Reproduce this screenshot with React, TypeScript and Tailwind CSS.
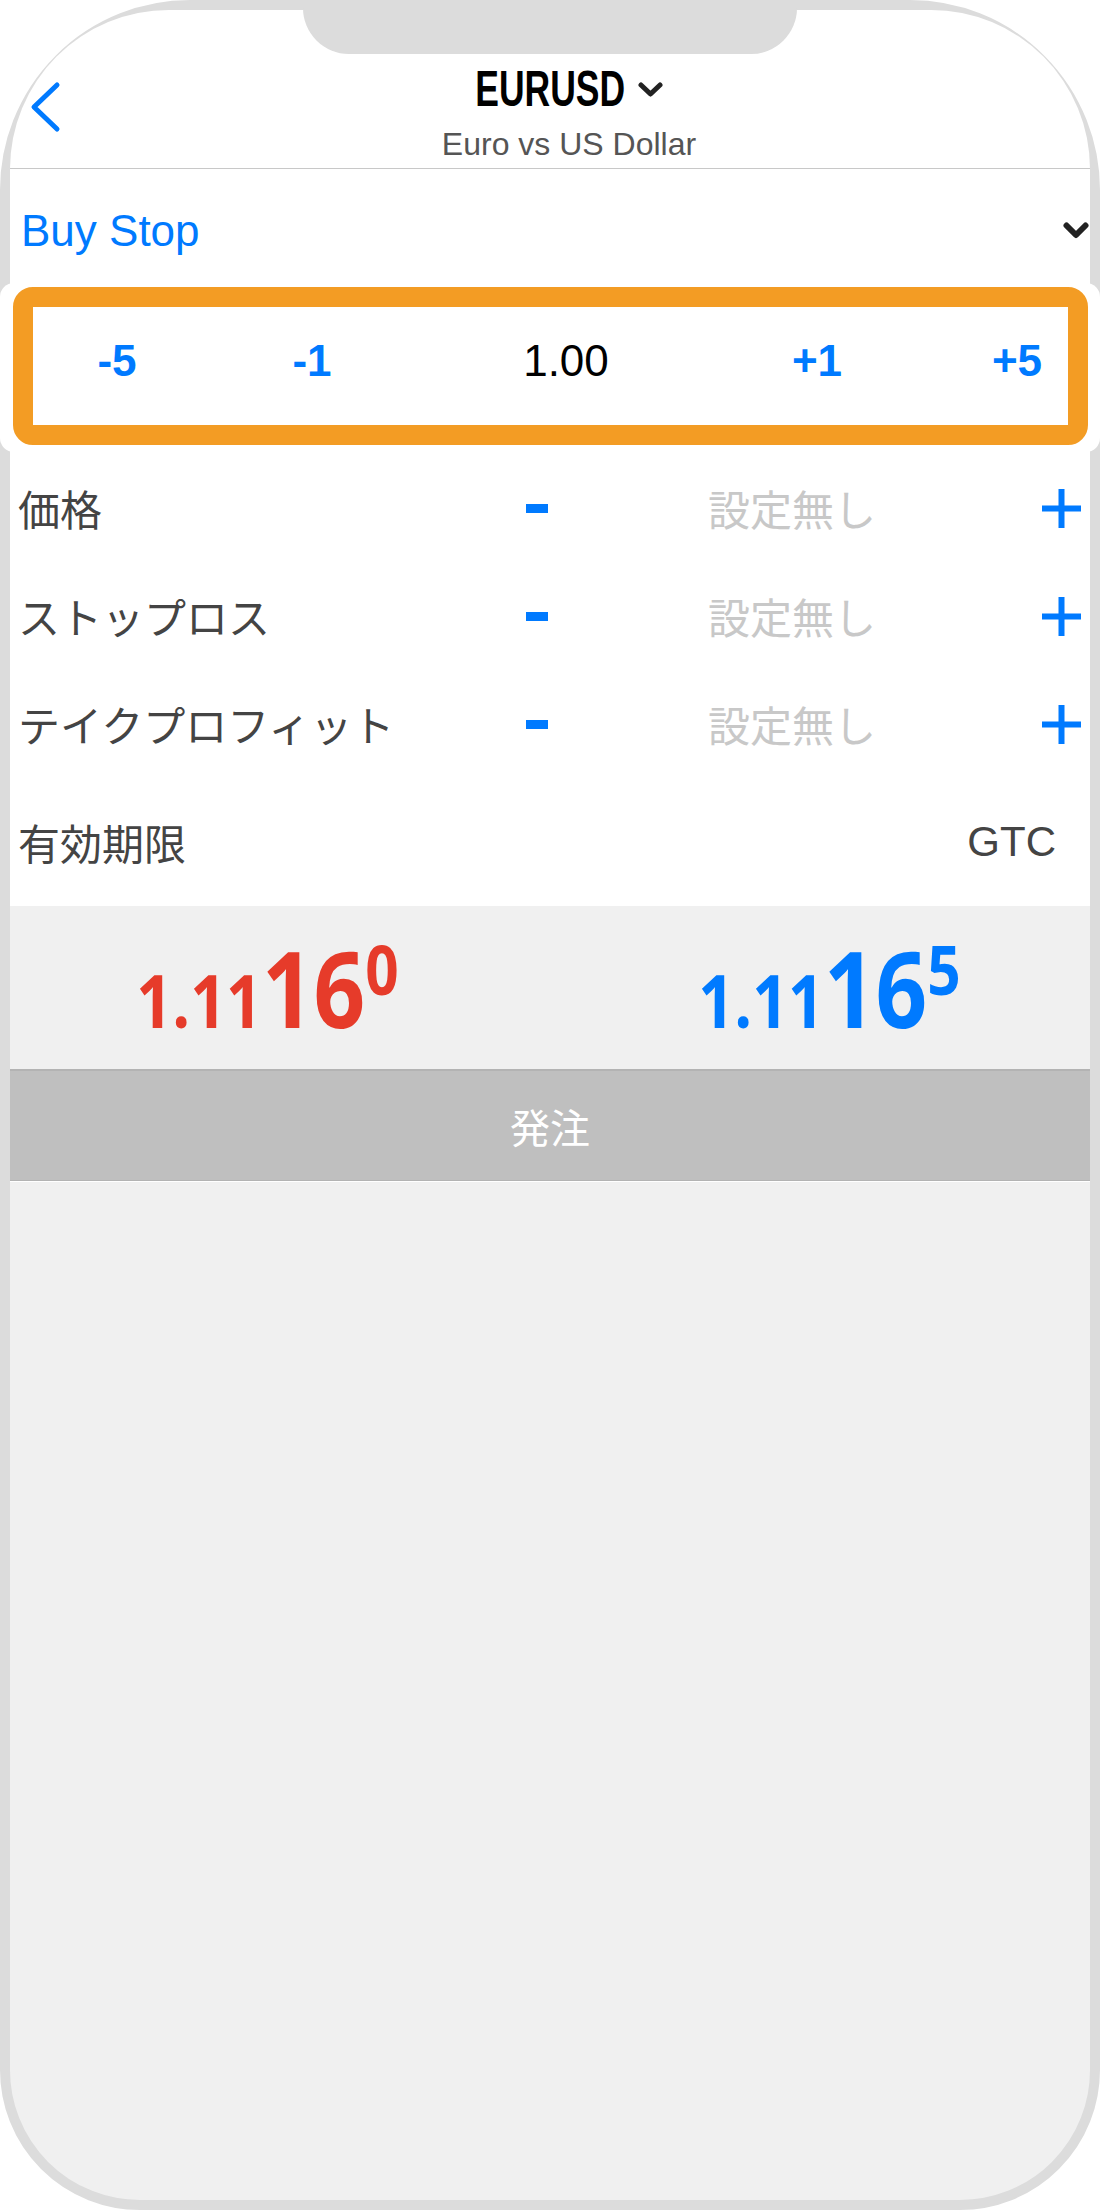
import React from 'react';

const SANS = "font-['Liberation_Sans','Noto_Sans_CJK_JP',sans-serif]";

type RowProps = { label: string };

const PlusIcon = () => (
    <svg width="39" height="39" viewBox="0 0 39 39" className="ml-auto shrink-0">
        <path d="M19.5 0 V39 M0 19.5 H39" stroke="#007aff" strokeWidth="6" />
    </svg>
);

const StepRow: React.FC<RowProps> = ({ label }) => (
    <div className="h-[108px] flex items-center pl-[8px] pr-[9px]">
        <span className="w-[508px] text-[42px] leading-none text-[#444] font-['Noto_Sans_CJK_JP',sans-serif]">{label}</span>
        <span className="w-[22px] h-[9px] bg-[#007aff] shrink-0" />
        <span className="ml-[160px] text-[42px] leading-none text-[#c8c8c8] font-['Noto_Sans_CJK_JP',sans-serif]">設定無し</span>
        <PlusIcon />
    </div>
);

type PriceProps = { head: string; big: string; sup: string; className: string };

const Price: React.FC<PriceProps> = ({ head, big, sup, className }) => (
    <div className={`flex items-baseline scale-x-[0.86] font-['Open_Sans',sans-serif] font-bold ${className}`}>
        <span className="text-[73px] leading-none">{head}</span>
        <span className="text-[105px] leading-none">{big}</span>
        <span className="self-start text-[68px] leading-none">{sup}</span>
    </div>
);

const App: React.FC = () => {
    const steps = ['-5', '-1', '+1', '+5'];

    return (
        <div className={`w-[1100px] h-[2210px] bg-white ${SANS}`}>
            <div className="relative w-full h-full rounded-t-[190px] rounded-b-[140px] border-[10px] border-[#dcdcdc] bg-[#f0f0f0] flex flex-col">
                {/* notch */}
                <div className="absolute -top-[10px] left-[293px] w-[494px] h-[54px] bg-[#dcdcdc] rounded-b-[46px]" />

                {/* header */}
                <div className="bg-white rounded-t-[180px] border-b border-[#c8c8c8] flex items-start pt-[54px] pb-[8px]">
                    <svg width="36" height="56" viewBox="0 0 36 56" fill="none" className="shrink-0 ml-[17px] mt-[15px]">
                        <path d="M30 6 L7 28 L30 50" stroke="#007aff" strokeWidth="5" strokeLinecap="round" strokeLinejoin="round" />
                    </svg>
                    <div className="flex-1 flex flex-col items-center pr-[15px]">
                        <div className="flex items-center h-[50px]">
                            <span className="inline-block origin-right scale-x-[0.71] -ml-[61px] text-[50px] leading-none font-bold text-black">EURUSD</span>
                            <svg width="25" height="16" viewBox="0 0 25 16" fill="none" className="ml-[13px] mt-[2px]">
                                <path d="M3 3 L12.5 12 L22 3" stroke="#222" strokeWidth="5" strokeLinecap="round" strokeLinejoin="round" />
                            </svg>
                        </div>
                        <div className="mt-[14px] text-[32px] leading-none text-[#555]">Euro vs US Dollar</div>
                    </div>
                </div>

                {/* form */}
                <div className="bg-white">
                    <div className="h-[114px] flex items-center pt-[10px] pl-[11px] pr-[1px]">
                        <span className="flex-1 text-[44px] leading-none text-[#007aff]">Buy Stop</span>
                        <svg width="26" height="18" viewBox="0 0 26 18" fill="none" className="shrink-0">
                            <path d="M3.5 3.5 L13 13 L22.5 3.5" stroke="#222" strokeWidth="6" strokeLinecap="round" strokeLinejoin="round" />
                        </svg>
                    </div>

                    <div className="-mx-[10px] bg-white rounded-[14px] pt-[4px] pb-[7px] pl-[13px] pr-[12px]">
                        <div className="h-[158px] border-[20px] border-[#f39c24] rounded-[20px] bg-white flex items-center pb-[10px] text-[44px] leading-none">
                            <span className="ml-[34px] w-[100px] text-center font-semibold text-[#007aff]">{steps[0]}</span>
                            <span className="ml-[95px] w-[100px] text-center font-semibold text-[#007aff]">{steps[1]}</span>
                            <span className="ml-[154px] w-[100px] text-center text-black">1.00</span>
                            <span className="ml-[151px] w-[100px] text-center font-semibold text-[#007aff]">{steps[2]}</span>
                            <span className="ml-[100px] w-[100px] text-center font-semibold text-[#007aff]">{steps[3]}</span>
                        </div>
                    </div>

                    <div className="pt-[2px]">
                        <StepRow label="価格" />
                        <StepRow label="ストップロス" />
                        <StepRow label="テイクプロフィット" />
                        <div className="h-[128px] flex items-center pl-[8px] pr-[34px]">
                            <span className="text-[42px] leading-none text-[#444] font-['Noto_Sans_CJK_JP',sans-serif]">有効期限</span>
                            <span className="ml-auto text-[42px] leading-none text-[#444]">GTC</span>
                        </div>
                    </div>
                </div>

                {/* prices */}
                <div className="h-[163px] grid grid-cols-2 items-center">
                    <div className="flex justify-center pr-[24px]">
                        <Price head="1.11" big="16" sup="0" className="text-[#e63b2a]" />
                    </div>
                    <div className="flex justify-center pl-[20px]">
                        <Price head="1.11" big="16" sup="5" className="text-[#007aff]" />
                    </div>
                </div>

                {/* order button */}
                <button
                    type="button"
                    className="h-[112px] border-t-2 border-b border-[#b3b3b3] bg-[#bfbfbf] flex items-center justify-center text-white text-[40px] leading-none font-['Noto_Sans_CJK_JP',sans-serif]"
                >
                    発注
                </button>
                <div className="h-px bg-white" />
            </div>
        </div>
    );
};

export default App;
